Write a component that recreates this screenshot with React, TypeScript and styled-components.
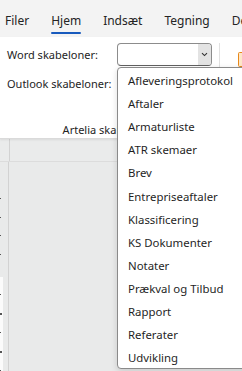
import React from 'react';
import styled, { createGlobalStyle } from 'styled-components';

const GlobalStyle = createGlobalStyle`
  html, body {
    margin: 0;
    padding: 0;
    width: 242px;
    height: 371px;
    overflow: hidden;
    background: #e9eaea;
    font-family: 'Noto Sans', 'Open Sans', sans-serif;
    color: #242424;
  }
`;

const SPage = styled.div`
  position: relative;
  width: 242px;
  height: 371px;
  overflow: hidden;
  display: flex;
  flex-direction: column;
`;

const STabBar = styled.div`
  height: 37px;
  background: #f3f3f3;
  display: flex;
  align-items: flex-end;
  padding-left: 5px;
  gap: 22px;
  flex-shrink: 0;
  white-space: nowrap;
`;

const STab = styled.div<{ $active?: boolean }>`
  position: relative;
  font-size: 12px;
  line-height: 16px;
  padding-bottom: 8px;
  color: #242424;

  &::after {
    content: '';
    display: ${(p) => (p.$active ? 'block' : 'none')};
    position: absolute;
    left: 0;
    right: 0;
    bottom: 3px;
    height: 2px;
    border-radius: 1px;
    background: #185abd;
  }
`;

const SRibbon = styled.div`
  height: 101px;
  background: #fff;
  border-bottom: 1px solid #dadada;
  box-shadow: 0 1px 2px rgba(0, 0, 0, 0.08);
  display: flex;
  flex-shrink: 0;
  position: relative;
  z-index: 1;
`;

const SGroup = styled.div`
  width: 219px;
  flex-shrink: 0;
  display: flex;
  flex-direction: column;
  padding-top: 6px;
  box-sizing: border-box;
`;

const SFieldRow = styled.div`
  display: flex;
  align-items: center;
  height: 23px;
  padding-left: 7px;
  margin-bottom: 6px;
`;

const SLabel = styled.span`
  font-size: 11px;
  width: 110px;
  white-space: nowrap;
`;

const SCombo = styled.div`
  width: 95px;
  height: 23px;
  box-sizing: border-box;
  border: 1px solid #8c8c8c;
  border-bottom-color: #616161;
  border-radius: 4px;
  display: flex;
  justify-content: flex-end;
  overflow: hidden;
`;

const SComboButton = styled.div`
  width: 13px;
  background: #e3e3e3;
  display: flex;
  align-items: center;
  justify-content: center;
`;

const SGroupTitle = styled.div`
  margin-top: auto;
  text-align: center;
  font-size: 11px;
  line-height: 16px;
  white-space: nowrap;
`;

const SSeparator = styled.div`
  width: 1px;
  flex-shrink: 0;
  background: #e1e1e1;
  margin: 6px 0 4px 0;
`;

const SIconSlot = styled.div`
  flex-shrink: 0;
  padding: 14px 0 0 18px;
`;

const SDocArea = styled.div`
  flex: 1;
  display: flex;
  flex-direction: column;
`;

const SHRuler = styled.div`
  height: 22px;
  border-bottom: 1px solid #dcdcdc;
  background: #eaebeb;
  display: flex;
`;

const SRulerCorner = styled.div`
  width: 9px;
  border-right: 1px solid #d2d2d2;
`;

const SDocBody = styled.div`
  flex: 1;
  display: flex;
`;

const SVRuler = styled.div`
  width: 9px;
  border-right: 1px solid #d2d2d2;
  display: flex;
  flex-direction: column;
  padding-top: 36px;
  box-sizing: border-box;
`;

const SRulerSection = styled.div<{ $white?: boolean }>`
  width: 3px;
  height: ${(p) => (p.$white ? 'auto' : '79px')};
  flex: ${(p) => (p.$white ? 1 : 'none')};
  background: ${(p) => (p.$white ? '#fbfbfb' : 'transparent')};
  display: flex;
  flex-direction: column;
  padding-top: ${(p) => (p.$white ? '17px' : '0')};
  gap: 17.5px;
`;

const STick = styled.div<{ $big?: boolean }>`
  width: ${(p) => (p.$big ? 2 : 1)}px;
  height: ${(p) => (p.$big ? 2 : 1)}px;
  background: #555;
  flex-shrink: 0;
`;

const SDropdown = styled.div`
  position: absolute;
  left: 117px;
  top: 67px;
  width: 140px;
  height: 302px;
  box-sizing: border-box;
  background: #fff;
  border: 1px solid #8a8a8a;
  border-radius: 4px;
  box-shadow: 0 2px 6px rgba(0, 0, 0, 0.14);
  padding-top: 1px;
  z-index: 5;
`;

const SItem = styled.div`
  height: 23.1px;
  display: flex;
  align-items: center;
  padding-left: 10px;
  font-size: 11.4px;
  color: #1f1f1f;
  white-space: nowrap;
`;

const tabs = ['Filer', 'Hjem', 'Indsæt', 'Tegning', 'Design'];

const items = [
  'Afleveringsprotokol',
  'Aftaler',
  'Armaturliste',
  'ATR skemaer',
  'Brev',
  'Entrepriseaftaler',
  'Klassificering',
  'KS Dokumenter',
  'Notater',
  'Prækval og Tilbud',
  'Rapport',
  'Referater',
  'Udvikling',
];

const Chevron = () => (
  <svg width="7" height="5" viewBox="0 0 7 5">
    <path d="M1 1.2 L3.5 3.6 L6 1.2" fill="none" stroke="#333" strokeWidth="1.1" />
  </svg>
);

const OrangeIcon = () => (
  <svg width="16" height="16" viewBox="0 0 16 16">
    <rect x="0.5" y="0.5" width="14" height="14" rx="1" fill="#fde7c8" stroke="#e8891a" />
  </svg>
);

const App = () => {
  return (
    <SPage>
      <GlobalStyle />
      <STabBar>
        {tabs.map((t) => (
          <STab key={t} $active={t === 'Hjem'}>
            {t}
          </STab>
        ))}
      </STabBar>
      <SRibbon>
        <SGroup>
          <SFieldRow>
            <SLabel>Word skabeloner:</SLabel>
            <SCombo>
              <SComboButton>
                <Chevron />
              </SComboButton>
            </SCombo>
          </SFieldRow>
          <SFieldRow>
            <SLabel>Outlook skabeloner:</SLabel>
          </SFieldRow>
          <SGroupTitle>Artelia skabeloner</SGroupTitle>
        </SGroup>
        <SSeparator />
        <SIconSlot>
          <OrangeIcon />
        </SIconSlot>
      </SRibbon>
      <SDocArea>
        <SHRuler>
          <SRulerCorner />
        </SHRuler>
        <SDocBody>
          <SVRuler>
            <SRulerSection>
              <STick />
              <STick />
              <STick />
              <STick />
            </SRulerSection>
            <SRulerSection $white>
              <STick />
              <STick $big />
              <STick />
              <STick $big />
              <STick />
            </SRulerSection>
          </SVRuler>
        </SDocBody>
      </SDocArea>
      <SDropdown>
        {items.map((i) => (
          <SItem key={i}>{i}</SItem>
        ))}
      </SDropdown>
    </SPage>
  );
};

export default App;
